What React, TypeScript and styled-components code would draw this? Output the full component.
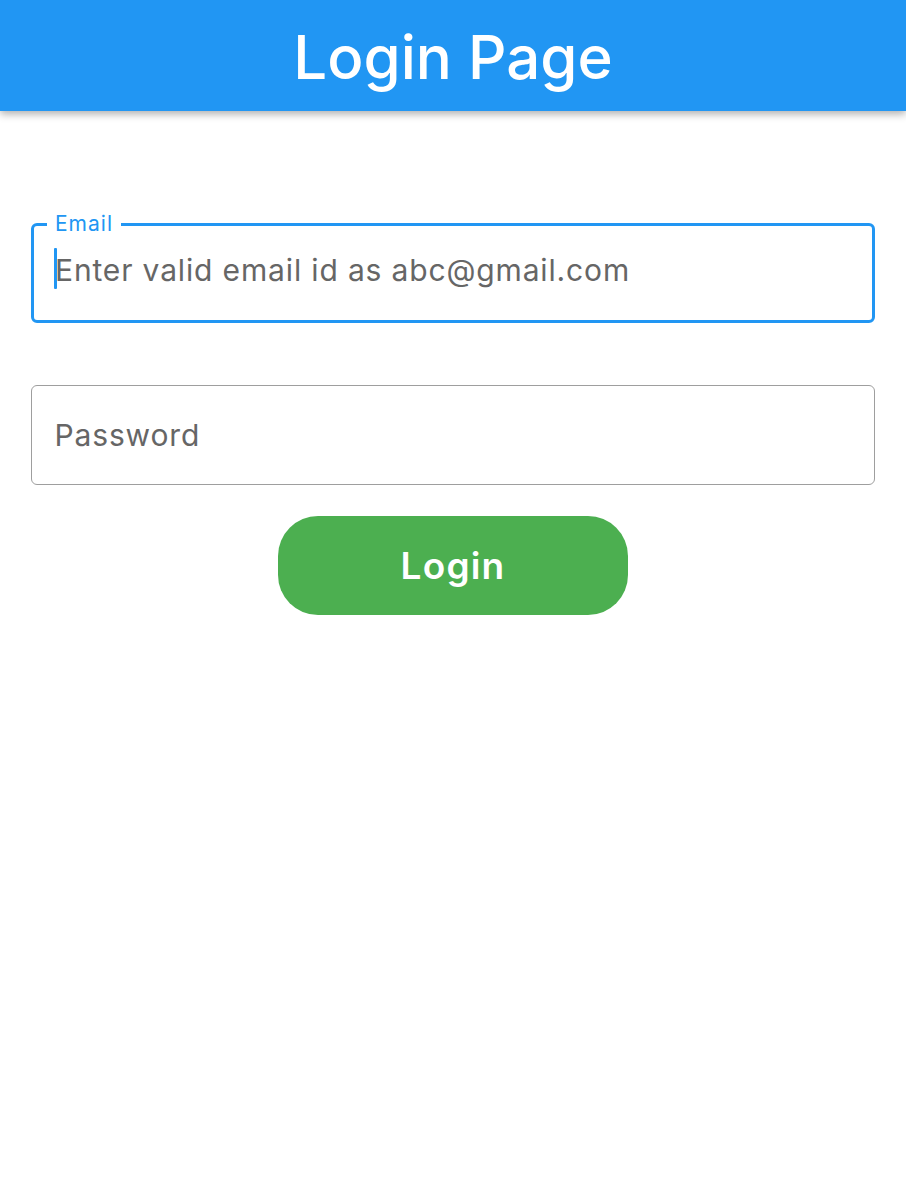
import React from "react";
import styled, { createGlobalStyle } from "styled-components";

const Global = createGlobalStyle`
  html, body { margin: 0; padding: 0; background: #fff; }
  body { font-family: Inter, "Noto Sans", sans-serif; }
  * { box-sizing: border-box; }
`;

const Page = styled.div`
  min-height: 1182px;
  background: #fff;
`;

const AppBar = styled.header`
  height: 111px;
  background: #2196f3;
  display: flex;
  align-items: center;
  justify-content: center;
  box-shadow: 0 3px 8px rgba(0, 0, 0, 0.32);
  position: relative;
  z-index: 1;
`;

const Title = styled.h1`
  margin: 0;
  color: #fff;
  font-size: 60px;
  font-weight: 500;
  letter-spacing: 0;
  line-height: 1;
  padding-top: 2px;
`;

const Form = styled.main`
  display: flex;
  flex-direction: column;
  padding: 112px 31px 0;
`;

const Field = styled.div<{ $focused?: boolean }>`
  position: relative;
  height: 100px;
  border-radius: 6px;
  border: ${(p) => (p.$focused ? "3px solid #2196f3" : "1.5px solid #9e9e9e")};
  display: flex;
  align-items: center;
  padding-left: ${(p) => (p.$focused ? "21px" : "22.5px")};
  padding-bottom: ${(p) => (p.$focused ? "6px" : "0")};
`;

const FloatLabel = styled.label`
  position: absolute;
  top: -14px;
  left: 13px;
  padding: 0 8px;
  background: #fff;
  color: #2196f3;
  font-size: 21px;
  letter-spacing: 1px;
  line-height: 24px;
`;

const Input = styled.input`
  border: none;
  outline: none;
  background: transparent;
  width: 100%;
  font-family: Inter, "Noto Sans", sans-serif;
  font-size: 30px;
  letter-spacing: 0.85px;
  color: #212121;
  padding: 0;
  caret-color: transparent;
  &::placeholder {
    color: #666;
    opacity: 1;
  }
`;

const Caret = styled.span`
  position: absolute;
  left: 20px;
  top: 22px;
  width: 3px;
  height: 41px;
  border-radius: 1px;
  background: #2196f3;
`;

const Spacer = styled.div<{ $h: number }>`
  height: ${(p) => p.$h}px;
`;

const ButtonRow = styled.div`
  display: flex;
  justify-content: center;
`;

const LoginButton = styled.button`
  width: 350px;
  height: 99px;
  border: none;
  border-radius: 40px;
  background: #4caf50;
  color: #fff;
  font-family: Inter, "Noto Sans", sans-serif;
  font-size: 37px;
  font-weight: 600;
  letter-spacing: 1.2px;
  cursor: pointer;
  padding: 0;
`;

export default function App() {
  return (
    <Page>
      <Global />
      <AppBar>
        <Title>Login Page</Title>
      </AppBar>
      <Form>
        <Field $focused>
          <FloatLabel>Email</FloatLabel>
          <Caret />
          <Input placeholder="Enter valid email id as abc@gmail.com" />
        </Field>
        <Spacer $h={62} />
        <Field>
          <Input type="password" placeholder="Password" />
        </Field>
        <Spacer $h={31} />
        <ButtonRow>
          <LoginButton>Login</LoginButton>
        </ButtonRow>
      </Form>
    </Page>
  );
}
